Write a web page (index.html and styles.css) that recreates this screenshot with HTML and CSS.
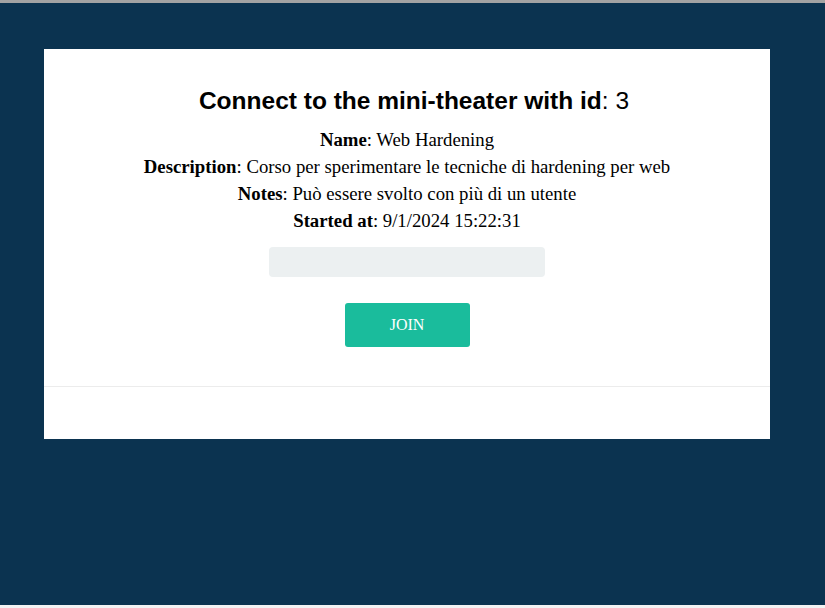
FILE: index.html
```html
<!DOCTYPE html>
<html>
<head>
<meta charset="utf-8">
<link rel="stylesheet" href="styles.css">
</head>
<body>
<div class="page">
  <div class="card">
    <div class="content">
      <h2 class="title"><b>Connect to the mini-theater with id</b>: 3</h2>
      <p class="line"><b>Name</b>: Web Hardening</p>
      <p class="line"><b>Description</b>: Corso per sperimentare le tecniche di hardening per web</p>
      <p class="line"><b>Notes</b>: Può essere svolto con più di un utente</p>
      <p class="line"><b>Started at</b>: 9/1/2024 15:22:31</p>
      <input class="field" type="text">
      <button class="join">JOIN</button>
    </div>
    <div class="footer"></div>
  </div>
</div>
</body>
</html>
```
FILE: styles.css
```css
html, body {
  margin: 0;
  padding: 0;
  height: 100%;
}
body {
  background: #0b3350;
  font-family: "Liberation Serif", "Times New Roman", serif;
  color: #000;
  border-top: 3px solid #a3a3a3;
  box-sizing: border-box;
  display: flex;
  flex-direction: column;
}
.page {
  flex: 1;
  padding: 46px 55px 0 44px;
  border-bottom: 3px solid #f2f2f2;
}
.card {
  background: #fff;
  display: flex;
  flex-direction: column;
}
.content {
  display: flex;
  flex-direction: column;
  align-items: center;
  padding: 38px 0 39px;
  border-bottom: 1px solid #ececec;
}
.title {
  font-family: "Liberation Sans", Arial, sans-serif;
  font-size: 24.5px;
  font-weight: normal;
  margin: 0 0 11px;
  padding-left: 14px;
  line-height: 28px;
}
.line {
  font-size: 18.75px;
  line-height: 27px;
  margin: 0;
}
.field {
  width: 276px;
  height: 30px;
  box-sizing: border-box;
  margin-top: 13px;
  background: #ecf0f1;
  border: none;
  border-radius: 4px;
  outline: none;
}
.join {
  margin-top: 26px;
  width: 125px;
  height: 44px;
  background: #1abc9c;
  color: #fff;
  border: none;
  border-radius: 3px;
  font-family: "Liberation Serif", "Times New Roman", serif;
  font-size: 16px;
}
.footer {
  height: 52px;
}
```
